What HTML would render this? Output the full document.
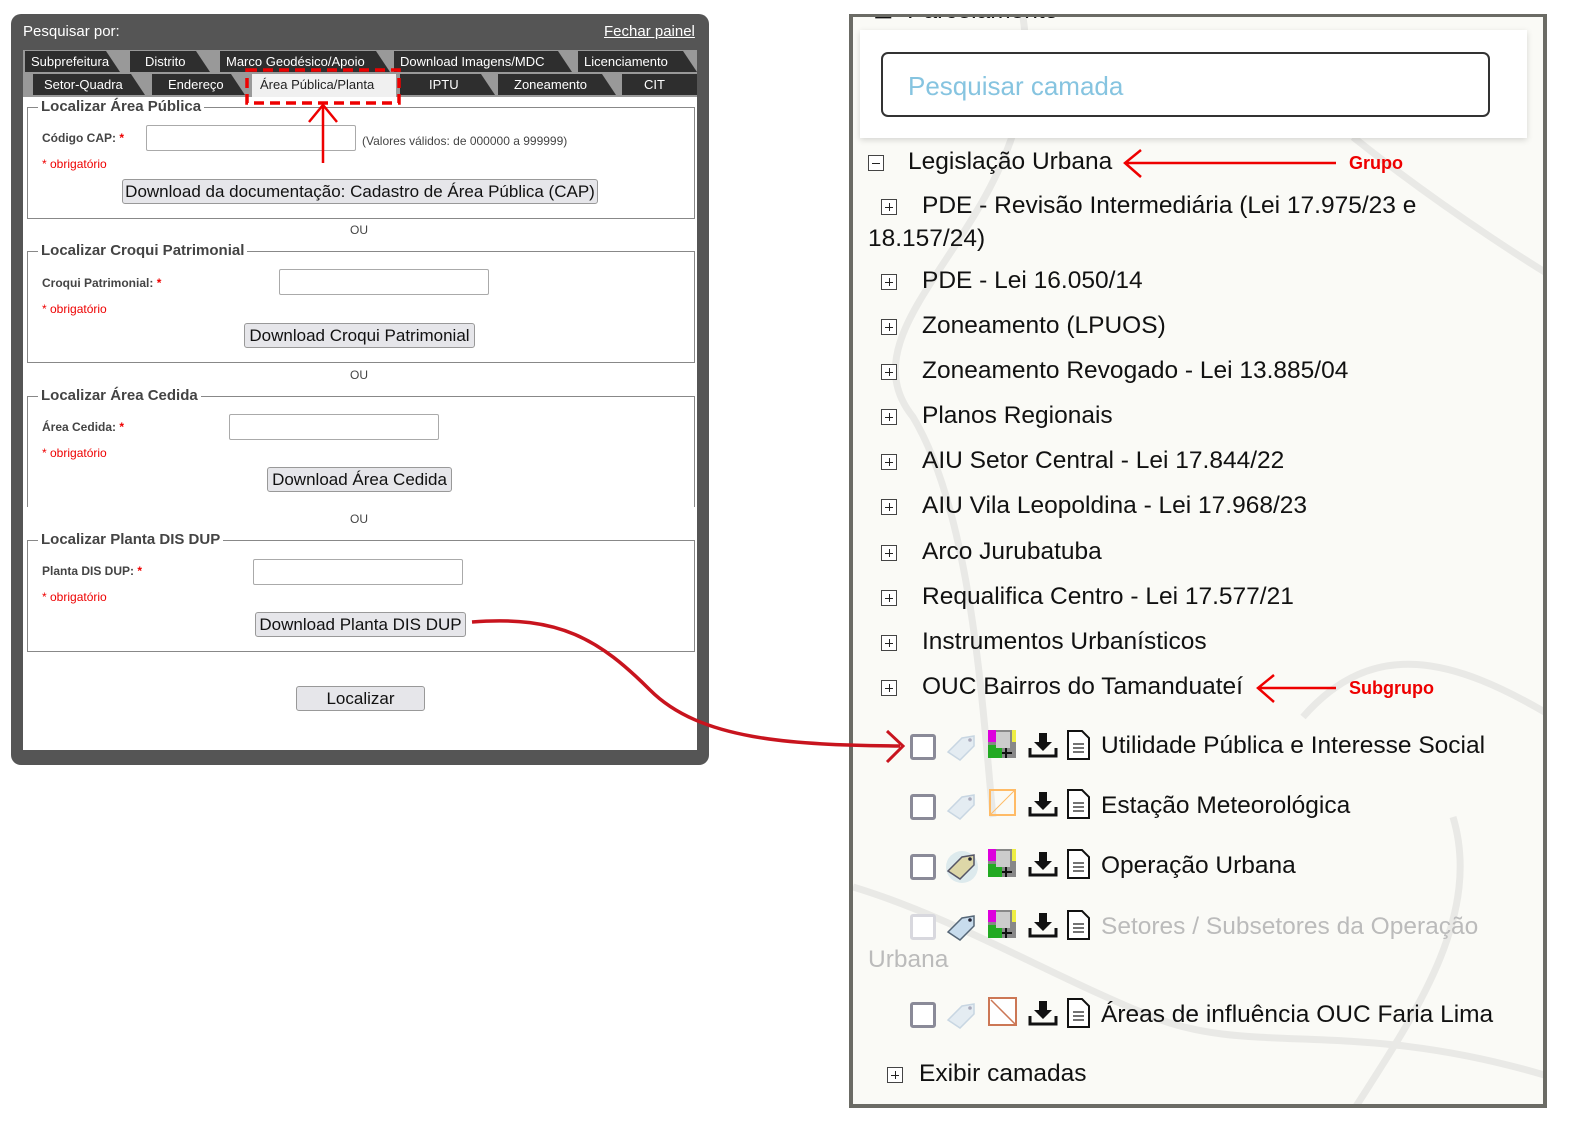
<!DOCTYPE html>
<html><head><meta charset="utf-8">
<style>
*{margin:0;padding:0;box-sizing:border-box}
body{width:1591px;height:1140px;background:#fff;position:relative;overflow:hidden;font-family:"Liberation Sans",Arial,sans-serif}
.a{position:absolute}
#lp{left:11px;top:14px;width:698px;height:751px;background:#555;border-radius:10px}
#inner{left:23px;top:97px;width:674px;height:653px;background:#fff}
.tab{position:absolute;height:21px;background:#2e2e2e;color:#fff;font-size:13px;line-height:21px;padding-left:6px;clip-path:polygon(0 0,calc(100% - 14px) 0,100% 100%,0 100%)}
.fs{position:absolute;left:27px;width:668px;border:1px solid #888}
.lg{position:absolute;top:-10px;left:10px;background:#fff;padding:0 3px;font-size:15px;font-weight:bold;color:#444}
.lbl{position:absolute;font-size:12px;font-weight:bold;color:#444}
.lbl b{color:#e00}
.ob{position:absolute;font-size:12px;color:#e00}
.inp{position:absolute;height:26px;border:1px solid #aaa;border-radius:2px;background:#fff}
.btn{position:absolute;height:25px;border:1px solid #999;border-radius:3px;background:#e6e6ea;font-size:17px;line-height:23px;text-align:center;color:#111}
.ou{position:absolute;left:350px;font-size:12px;color:#444}
#rp{left:849px;top:14px;width:698px;height:1094px;border:4px solid #6b6b65;border-top-width:3px;background:#fafaf6;overflow:hidden}
.t{position:absolute;font-size:24.5px;color:#111;white-space:nowrap}
.pl{position:absolute;width:16px;height:16px;border:1px solid #444;background:#fff}
.pl:before{content:"";position:absolute;left:3px;top:6.5px;width:8px;height:1.5px;background:#222}
.pl.p:after{content:"";position:absolute;left:6.5px;top:3px;width:1.5px;height:8px;background:#222}
.cb{position:absolute;left:910px;width:26px;height:26px;border:3px solid #8a8a98;border-radius:3px;background:#fff}
.red{color:#e00;font-weight:bold;font-size:18px;position:absolute}
</style></head><body>
<div id="lp" class="a"></div>
<div class="a" style="left:23px;top:23px;color:#fff;font-size:15px">Pesquisar por:</div>
<div class="a" style="left:604px;top:23px;color:#fff;font-size:15px;text-decoration:underline">Fechar painel</div>
<div class="a" style="left:23px;top:50px;width:674px;height:47px;background:#999"></div>
<div class="tab" style="left:25px;top:51px;width:95px">Subprefeitura</div>
<div class="tab" style="left:130px;top:51px;width:80px;padding-left:15px">Distrito</div>
<div class="tab" style="left:220px;top:51px;width:170px">Marco Geodésico/Apoio</div>
<div class="tab" style="left:394px;top:51px;width:178px">Download Imagens/MDC</div>
<div class="tab" style="left:578px;top:51px;width:119px">Licenciamento</div>
<div class="tab" style="left:33px;top:74px;width:112px;padding-left:11px">Setor-Quadra</div>
<div class="tab" style="left:152px;top:74px;width:93px;padding-left:16px">Endereço</div>
<div class="a" style="left:252px;top:74px;width:144px;height:23px;background:#f0f0f0;font-size:13px;line-height:22px;padding-left:8px;color:#222">Área Pública/Planta</div>
<div class="tab" style="left:400px;top:74px;width:95px;padding-left:29px">IPTU</div>
<div class="tab" style="left:498px;top:74px;width:118px;padding-left:16px">Zoneamento</div>
<div class="tab" style="left:622px;top:74px;width:75px;padding-left:22px;clip-path:none">CIT</div>
<div id="inner" class="a"></div>

<div class="fs" style="top:107px;height:112px"><div class="lg">Localizar Área Pública</div></div>
<div class="lbl" style="left:42px;top:131px">Código CAP: <b>*</b></div>
<div class="inp" style="left:146px;top:125px;width:210px"></div>
<div class="a" style="left:362px;top:134px;font-size:12px;color:#444">(Valores válidos: de 000000 a 999999)</div>
<div class="ob" style="left:42px;top:157px">* obrigatório</div>
<div class="btn" style="left:122px;top:179px;width:476px">Download da documentação: Cadastro de Área Pública (CAP)</div>
<div class="ou" style="top:223px">OU</div>

<div class="fs" style="top:251px;height:112px"><div class="lg">Localizar Croqui Patrimonial</div></div>
<div class="lbl" style="left:42px;top:276px">Croqui Patrimonial: <b>*</b></div>
<div class="inp" style="left:279px;top:269px;width:210px"></div>
<div class="ob" style="left:42px;top:302px">* obrigatório</div>
<div class="btn" style="left:244px;top:323px;width:231px">Download Croqui Patrimonial</div>
<div class="ou" style="top:368px">OU</div>

<div class="fs" style="top:396px;height:111px;border-bottom:none"><div class="lg">Localizar Área Cedida</div></div>
<div class="lbl" style="left:42px;top:420px">Área Cedida: <b>*</b></div>
<div class="inp" style="left:229px;top:414px;width:210px"></div>
<div class="ob" style="left:42px;top:446px">* obrigatório</div>
<div class="btn" style="left:267px;top:467px;width:185px">Download Área Cedida</div>
<div class="ou" style="top:512px">OU</div>

<div class="fs" style="top:540px;height:112px"><div class="lg">Localizar Planta DIS DUP</div></div>
<div class="lbl" style="left:42px;top:564px">Planta DIS DUP: <b>*</b></div>
<div class="inp" style="left:253px;top:559px;width:210px"></div>
<div class="ob" style="left:42px;top:590px">* obrigatório</div>
<div class="btn" style="left:255px;top:612px;width:211px">Download Planta DIS DUP</div>
<div class="btn" style="left:296px;top:686px;width:129px">Localizar</div>

<div id="rp" class="a">
<svg width="698" height="1094" style="position:absolute;left:0;top:0" fill="none" stroke="#e9e9e6" stroke-width="7">
<path d="M170 0 C200 200 -20 300 60 400 C120 500 130 700 140 800"/>
<path d="M500 120 C600 200 700 260 700 260"/>
<path d="M450 700 C520 620 600 640 700 700"/>
<path d="M0 870 C100 900 200 960 300 1000 C400 1040 500 1000 698 1060"/>
<path d="M600 800 C630 900 560 1000 500 1094"/>
</svg>
<div class="t" style="left:20px;top:-22px;color:#111">⊟ &nbsp;Parcelamento</div>
</div>
<div class="a" style="left:860px;top:30px;width:667px;height:108px;background:#fff;box-shadow:0 2px 6px rgba(0,0,0,.15)"></div>
<div class="a" style="left:881px;top:52px;width:609px;height:65px;border:2px solid #333;border-radius:7px;background:#fff;font-size:26px;color:#86c4e0;padding:17px 0 0 25px">Pesquisar camada</div>

<div class="pl" style="left:868px;top:155px"></div><div class="t" style="left:908px;top:148px">Legislação Urbana</div>
<div class="pl p" style="left:881px;top:199px"></div><div class="t" style="left:922px;top:192px">PDE - Revisão Intermediária (Lei 17.975/23 e</div>
<div class="t" style="left:868px;top:225px">18.157/24)</div>
<div class="pl p" style="left:881px;top:274px"></div><div class="t" style="left:922px;top:267px">PDE - Lei 16.050/14</div>
<div class="pl p" style="left:881px;top:319px"></div><div class="t" style="left:922px;top:312px">Zoneamento (LPUOS)</div>
<div class="pl p" style="left:881px;top:364px"></div><div class="t" style="left:922px;top:357px">Zoneamento Revogado - Lei 13.885/04</div>
<div class="pl p" style="left:881px;top:409px"></div><div class="t" style="left:922px;top:402px">Planos Regionais</div>
<div class="pl p" style="left:881px;top:454px"></div><div class="t" style="left:922px;top:447px">AIU Setor Central - Lei 17.844/22</div>
<div class="pl p" style="left:881px;top:499px"></div><div class="t" style="left:922px;top:492px">AIU Vila Leopoldina - Lei 17.968/23</div>
<div class="pl p" style="left:881px;top:545px"></div><div class="t" style="left:922px;top:538px">Arco Jurubatuba</div>
<div class="pl p" style="left:881px;top:590px"></div><div class="t" style="left:922px;top:583px">Requalifica Centro - Lei 17.577/21</div>
<div class="pl p" style="left:881px;top:635px"></div><div class="t" style="left:922px;top:628px">Instrumentos Urbanísticos</div>
<div class="pl p" style="left:881px;top:680px"></div><div class="t" style="left:922px;top:673px">OUC Bairros do Tamanduateí</div>

<svg class="a" style="left:0;top:0" width="1591" height="1140">
<defs>
<g id="leg"><rect x="0" y="0" width="28" height="28" fill="#888"/><rect x="0" y="0" width="8" height="12" fill="#d0d"/><rect x="24" y="0" width="4" height="12" fill="#ee4"/><rect x="0" y="15" width="14" height="13" fill="#2a2"/><rect x="8" y="2" width="14" height="16" fill="#ccc"/><path d="M18 18 v10 M14 23 h10" stroke="#111" stroke-width="2"/></g>
<g id="dl"><path d="M10 0 h8 v9 h5 l-9 9 l-9 -9 h5 Z" fill="#111"/><path d="M1 15 v8 h26 v-8" fill="none" stroke="#111" stroke-width="3"/></g>
<g id="doc"><path d="M1 1 h14 l7 7 v21 h-21 Z" fill="#fff" stroke="#111" stroke-width="2"/><path d="M6 14h11M6 18h11M6 22h11" stroke="#444" stroke-width="1.5"/></g>
</defs>
<g transform="translate(944,730)"><path d="M4 22 L18 8 L30 6 L30 16 L16 30 Z" fill="#e4ecf2" stroke="#c8d6e2" stroke-width="1.5"/><circle cx="26" cy="10" r="1.8" fill="#aab"/></g>
<use href="#leg" x="988" y="730"/><use href="#dl" x="1029" y="733"/><use href="#doc" x="1067" y="730"/>
<g transform="translate(944,789)"><path d="M4 22 L18 8 L30 6 L30 16 L16 30 Z" fill="#e4ecf2" stroke="#c8d6e2" stroke-width="1.5"/><circle cx="26" cy="10" r="1.8" fill="#aab"/></g>
<rect x="990" y="790" width="25" height="25" fill="none" stroke="#fb6" stroke-width="2"/><path d="M991 814 L1014 791" stroke="#fb6"/><use href="#dl" x="1029" y="792"/><use href="#doc" x="1067" y="789"/>
<g transform="translate(944,849)"><circle cx="18" cy="18" r="16" fill="#9cc6d8" opacity=".3"/><path d="M4 22 L18 8 L30 6 L30 16 L16 30 Z" fill="#ddd7a8" stroke="#556" stroke-width="1.5"/><circle cx="26" cy="10" r="1.8" fill="#223"/></g>
<use href="#leg" x="988" y="849"/><use href="#dl" x="1029" y="852"/><use href="#doc" x="1067" y="849"/>
<g transform="translate(944,910)"><path d="M4 22 L18 8 L30 6 L30 16 L16 30 Z" fill="#c8dced" stroke="#567" stroke-width="1.5"/><circle cx="26" cy="10" r="1.8" fill="#223"/></g>
<use href="#leg" x="988" y="910"/><use href="#dl" x="1029" y="913"/><use href="#doc" x="1067" y="910"/>
<g transform="translate(944,998)"><path d="M4 22 L18 8 L30 6 L30 16 L16 30 Z" fill="#e4ecf2" stroke="#c8d6e2" stroke-width="1.5"/><circle cx="26" cy="10" r="1.8" fill="#aab"/></g>
<rect x="989" y="998" width="27" height="27" fill="#fff" stroke="#c75" stroke-width="2"/><path d="M991 1000 L1015 1024" stroke="#c75" stroke-width="1.5"/><use href="#dl" x="1029" y="1001"/><use href="#doc" x="1067" y="998"/>
<g stroke="#e00" stroke-width="2.5" fill="none">
<rect x="247" y="70" width="152" height="33" stroke-dasharray="10,6" stroke-width="3.5"/>
<path d="M323 163 V105 M309 122 L323 105 L337 122"/>
<path d="M1125 163 H1336 M1141 150 L1125 163 L1141 177"/>
<path d="M1258 688 H1336 M1274 675 L1258 688 L1274 702"/>
</g>
<path d="M472 622 C560 615 600 640 650 690 C700 740 790 745 900 746" stroke="#c8141e" stroke-width="3.5" fill="none"/>
<path d="M887 731 L903 746 L887 762" stroke="#c8141e" stroke-width="3" fill="none"/>
</svg>
<div class="red" style="left:1349px;top:153px">Grupo</div>
<div class="red" style="left:1349px;top:678px">Subgrupo</div>

<div class="cb" style="top:734px"></div><div class="t" style="left:1101px;top:732px">Utilidade Pública e Interesse Social</div>
<div class="cb" style="top:794px"></div><div class="t" style="left:1101px;top:792px">Estação Meteorológica</div>
<div class="cb" style="top:854px"></div><div class="t" style="left:1101px;top:852px">Operação Urbana</div>
<div class="cb" style="top:914px;border-color:#d8d8de"></div><div class="t" style="left:1101px;top:913px;color:#bbb">Setores / Subsetores da Operação</div>
<div class="t" style="left:868px;top:946px;color:#bbb">Urbana</div>
<div class="cb" style="top:1002px"></div><div class="t" style="left:1101px;top:1001px">Áreas de influência OUC Faria Lima</div>
<div class="pl p" style="left:887px;top:1067px"></div><div class="t" style="left:919px;top:1060px">Exibir camadas</div>
</body></html>
